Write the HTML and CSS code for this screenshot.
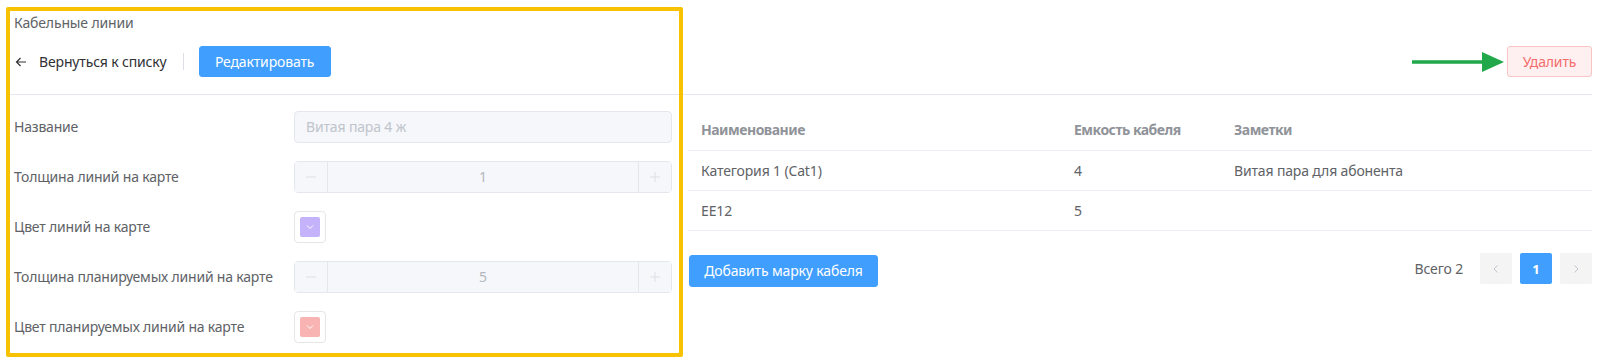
FILE: index.html
```html
<!DOCTYPE html>
<html lang="ru">
<head>
  <meta charset="UTF-8">
  <title>Кабельные линии</title>
  <link rel="stylesheet" href="styles.css">
</head>
<body>
<div class="page">
  <div class="crumb">Кабельные линии</div>

  <div class="header">
    <a class="back" href="#">
      <svg width="12" height="12" viewBox="0 0 12 12"><path d="M11 6H1.5M5.5 2L1.5 6l4 4" fill="none" stroke="#303133" stroke-width="1.2"/></svg>
      <span>Вернуться к списку</span>
    </a>
    <span class="divider"></span>
    <button class="btn btn-primary btn-edit">Редактировать</button>
    <div class="spacer"></div>
    <svg class="pointer" width="92" height="22" viewBox="0 0 92 22"><path d="M0 11H72" stroke="#21a84a" stroke-width="3.4" stroke-linecap="round"/><path d="M70 1L92 11L70 21Z" fill="#21a84a"/></svg>
    <button class="btn btn-danger">Удалить</button>
  </div>

  <div class="content">
    <form class="form">
      <div class="form-item">
        <label class="form-label">Название</label>
        <div class="input is-disabled">Витая пара 4 ж</div>
      </div>
      <div class="form-item">
        <label class="form-label">Толщина линий на карте</label>
        <div class="number is-disabled">
          <span class="num-btn num-dec"><svg width="12" height="12" viewBox="0 0 12 12"><path d="M1 6h10" stroke="#dcdfe6" stroke-width="1"/></svg></span>
          <span class="num-value">1</span>
          <span class="num-btn num-inc"><svg width="12" height="12" viewBox="0 0 12 12"><path d="M1 6h10M6 1v10" stroke="#dcdfe6" stroke-width="1"/></svg></span>
        </div>
      </div>
      <div class="form-item">
        <label class="form-label">Цвет линий на карте</label>
        <div class="color-picker">
          <span class="swatch swatch-purple"><svg width="10" height="10" viewBox="0 0 10 10"><path d="M2 3.5l3 3 3-3" fill="none" stroke="#fff" stroke-width="1"/></svg></span>
        </div>
      </div>
      <div class="form-item">
        <label class="form-label">Толщина планируемых линий на карте</label>
        <div class="number is-disabled">
          <span class="num-btn num-dec"><svg width="12" height="12" viewBox="0 0 12 12"><path d="M1 6h10" stroke="#dcdfe6" stroke-width="1"/></svg></span>
          <span class="num-value">5</span>
          <span class="num-btn num-inc"><svg width="12" height="12" viewBox="0 0 12 12"><path d="M1 6h10M6 1v10" stroke="#dcdfe6" stroke-width="1"/></svg></span>
        </div>
      </div>
      <div class="form-item">
        <label class="form-label">Цвет планируемых линий на карте</label>
        <div class="color-picker">
          <span class="swatch swatch-pink"><svg width="10" height="10" viewBox="0 0 10 10"><path d="M2 3.5l3 3 3-3" fill="none" stroke="#fff" stroke-width="1"/></svg></span>
        </div>
      </div>
    </form>

    <div class="side">
      <table class="table">
        <thead>
          <tr><th class="col-name">Наименование</th><th class="col-cap">Емкость кабеля</th><th>Заметки</th></tr>
        </thead>
        <tbody>
          <tr><td>Категория 1 (Cat1)</td><td>4</td><td>Витая пара для абонента</td></tr>
          <tr><td>EE12</td><td>5</td><td></td></tr>
        </tbody>
      </table>
      <div class="table-footer">
        <button class="btn btn-primary btn-add">Добавить марку кабеля</button>
        <div class="pagination">
          <span class="total">Всего 2</span>
          <span class="page-btn"><svg width="10" height="10" viewBox="0 0 10 10"><path d="M6.5 1.5L3 5l3.5 3.5" fill="none" stroke="#c0c4cc" stroke-width="1"/></svg></span>
          <span class="page-btn active">1</span>
          <span class="page-btn"><svg width="10" height="10" viewBox="0 0 10 10"><path d="M3.5 1.5L7 5 3.5 8.5" fill="none" stroke="#c0c4cc" stroke-width="1"/></svg></span>
        </div>
      </div>
    </div>
  </div>
</div>
<div class="highlight"></div>
</body>
</html>
```

FILE: styles.css
```css
body {
  margin: 0;
  font-family: "Noto Sans", "Open Sans", sans-serif;
  font-size: 14px;
  letter-spacing: -0.15px;
  color: #606266;
  background: #fff;
  position: relative;
}
.page {
  padding: 13px 11px 0 14px;
}
.crumb {
  font-size: 14px;
  line-height: 20px;
  color: #606266;
}

/* header */
.header {
  display: flex;
  align-items: center;
  margin: 13px 0 0 -4px;
  padding: 0 0 17px 4px;
  border-bottom: 1px solid #e4e7ed;
}
.back {
  display: flex;
  align-items: center;
  gap: 12px;
  color: #303133;
  text-decoration: none;
  font-size: 14px;
  margin-left: 1px;
}
.divider {
  width: 1px;
  height: 17px;
  background: #dcdfe6;
  margin: 0 15px 0 16px;
}
.spacer {
  flex: 1;
}
.pointer {
  margin-right: 3px;
}
.btn {
  font-family: inherit;
  font-size: 14px;
  letter-spacing: -0.15px;
  height: 31px;
  padding: 0 16px;
  border-radius: 3px;
  border: 1px solid transparent;
  cursor: pointer;
}
.btn-primary {
  background: #409eff;
  border-color: #409eff;
  color: #fff;
}
.btn-edit {
  width: 132px;
  padding: 0;
}
.btn-danger {
  background: #fef0f0;
  border-color: #fbc4c4;
  color: #f56c6c;
  width: 85px;
  padding: 0;
}

/* content */
.content {
  display: flex;
  align-items: flex-start;
  margin-top: 16px;
}
.form {
  width: 658px;
  flex: none;
  margin: 0;
}
.form-item {
  display: flex;
  align-items: center;
  height: 32px;
  margin-bottom: 18px;
}
.form-label {
  width: 280px;
  flex: none;
  color: #606266;
  font-size: 14px;
  letter-spacing: -0.2px;
  line-height: 32px;
}
.input {
  box-sizing: border-box;
  width: 378px;
  height: 32px;
  line-height: 30px;
  padding: 0 11px;
  border: 1px solid #e4e7ed;
  border-radius: 4px;
  background: #f5f7fa;
  color: #c0c4cc;
}
.number {
  box-sizing: border-box;
  display: flex;
  width: 378px;
  height: 32px;
  border: 1px solid #e4e7ed;
  border-radius: 4px;
  background: #f5f7fa;
}
.num-btn {
  width: 32px;
  display: flex;
  align-items: center;
  justify-content: center;
  background: #f5f7fa;
}
.num-dec {
  border-right: 1px solid #e4e7ed;
}
.num-inc {
  border-left: 1px solid #e4e7ed;
}
.num-value {
  flex: 1;
  text-align: center;
  line-height: 30px;
  color: #b4b7bd;
}
.color-picker {
  box-sizing: border-box;
  width: 32px;
  height: 32px;
  padding: 5px;
  border: 1px solid #e6e6e6;
  border-radius: 4px;
}
.swatch {
  display: flex;
  align-items: center;
  justify-content: center;
  width: 20px;
  height: 20px;
  border-radius: 2px;
}
.swatch-purple {
  background: #c4b3fa;
}
.swatch-pink {
  background: #f8b3b3;
}

/* table */
.side {
  flex: 1;
  margin-left: 16px;
}
.table {
  width: 100%;
  border-collapse: collapse;
  margin-top: -1px;
}
.table th,
.table td {
  text-align: left;
  height: 40px;
  padding: 0 13px;
  border-bottom: 1px solid #ebeef5;
  font-size: 14px;
  box-sizing: border-box;
}
.table th {
  color: #909399;
  font-weight: 700;
  letter-spacing: -0.5px;
}
.table td {
  color: #606266;
}
.col-name {
  width: 373px;
}
.col-cap {
  width: 160px;
}
.table-footer {
  display: flex;
  align-items: center;
  justify-content: space-between;
  margin-top: 24px;
  padding-left: 1px;
}
.btn-add {
  height: 32px;
  width: 189px;
  padding: 0;
}
.pagination {
  display: flex;
  align-items: center;
  gap: 8px;
  margin-top: -4px;
}
.total {
  margin-right: 9px;
  color: #606266;
}
.page-btn {
  width: 32px;
  height: 31px;
  display: flex;
  align-items: center;
  justify-content: center;
  background: #f4f4f5;
  border-radius: 2px;
  font-size: 13px;
  font-weight: 700;
}
.page-btn.active {
  background: #409eff;
  color: #fff;
}

/* annotation frame */
.highlight {
  position: absolute;
  left: 6px;
  top: 7px;
  width: 677px;
  height: 350px;
  box-sizing: border-box;
  border: 4px solid #f8c200;
  border-radius: 2px;
  pointer-events: none;
}
```
